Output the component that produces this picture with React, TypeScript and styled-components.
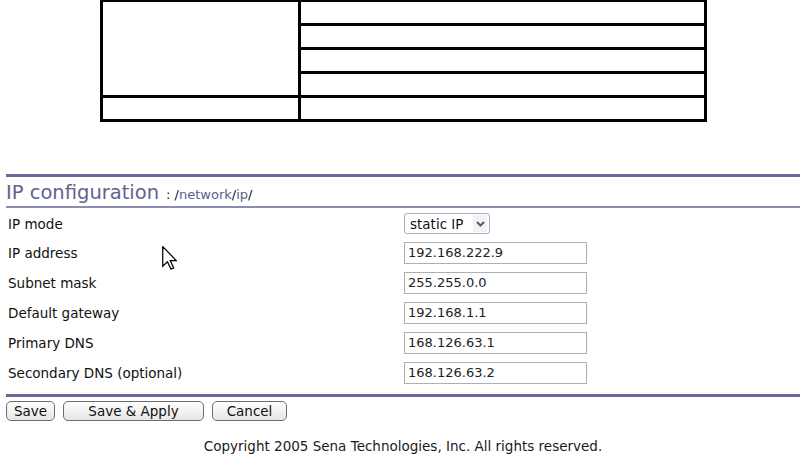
import React from "react"
import styled, { createGlobalStyle } from "styled-components"

const GlobalStyle = createGlobalStyle`
    html, body {
        margin: 0;
        padding: 0;
        background: #ffffff;
    }
    body {
        font-family: "DejaVu Sans", "Liberation Sans", sans-serif;
        color: #111111;
    }
`

const Page = styled.div`
    position: relative;
    display: flow-root;
    width: 806px;
    height: 470px;
    overflow: hidden;
`

const Frame = styled.div`
    display: grid;
    grid-template-columns: 195px 1fr;
    grid-auto-rows: 21px;
    gap: 3px;
    width: 601px;
    margin: -1px auto 0;
    border: 3px solid #000000;
    background: #000000;
`

const FrameCell = styled.div<{ span?: number }>`
    background: #ffffff;
    grid-row: ${({ span }) => (span ? `span ${span}` : "auto")};
`

const Section = styled.div`
    margin: 52px 6px 0;
`

const Heading = styled.div`
    display: flex;
    align-items: baseline;
    height: 34px;
    box-sizing: border-box;
    padding-top: 4px;
    border-top: 3px solid #6a6a98;
    border-bottom: 2px solid #8c8cb2;
`

const Title = styled.span`
    font-size: 19.5px;
    color: #62628e;
    margin-right: 7px;
`

const Crumbs = styled.span`
    font-size: 13px;
    color: #111111;
`

const Crumb = styled.span`
    color: #56628a;
`

const Rows = styled.div`
    padding-top: 1px;
`

const Row = styled.div`
    display: grid;
    grid-template-columns: 398px 1fr;
    align-items: center;
    padding: 4px 0;
`

const Label = styled.div`
    font-size: 13.5px;
    padding-left: 2px;
`

const TextBox = styled.div`
    width: 183px;
    height: 22px;
    box-sizing: border-box;
    border: 1px solid #a9b0b6;
    padding-left: 3px;
    font-size: 13px;
    line-height: 20px;
    color: #222222;
    background: #ffffff;
`

const Select = styled.div`
    display: flex;
    align-items: center;
    justify-content: space-between;
    width: 86px;
    height: 21px;
    box-sizing: border-box;
    border: 1px solid #a9b0b6;
    border-radius: 3px;
    padding: 0 2px 0 5px;
    font-size: 13.5px;
    background: #ffffff;
`

const SelectArrow = styled.span`
    display: flex;
    align-items: center;
    justify-content: center;
    width: 14px;
    height: 17px;
    background: #f1f3f7;
`

const Rule = styled.div`
    margin-top: 6px;
    border-top: 3px solid #6a6a98;
`

const Buttons = styled.div`
    display: flex;
    gap: 8px;
    margin-top: 4px;
`

const Button = styled.button<{ w: number }>`
    width: ${({ w }) => w}px;
    height: 20px;
    padding: 0;
    border: 1px solid #6d6d6d;
    border-radius: 5px;
    background: linear-gradient(#ffffff, #e6e6e6);
    font-family: "DejaVu Sans", "Liberation Sans", sans-serif;
    font-size: 13.5px;
    color: #111111;
    line-height: 18px;
`

const Footer = styled.div`
    margin-top: 17px;
    text-align: center;
    font-size: 13.5px;
    color: #1a1a1a;
`

const Cursor = styled.svg`
    position: absolute;
    left: 162px;
    top: 246px;
`

const fields = [
    { label: "IP address", value: "192.168.222.9" },
    { label: "Subnet mask", value: "255.255.0.0" },
    { label: "Default gateway", value: "192.168.1.1" },
    { label: "Primary DNS", value: "168.126.63.1" },
    { label: "Secondary DNS (optional)", value: "168.126.63.2" },
]

const App = (): JSX.Element => (
    <Page>
        <GlobalStyle />
        <Frame>
            <FrameCell span={4} />
            <FrameCell />
            <FrameCell />
            <FrameCell />
            <FrameCell />
            <FrameCell />
            <FrameCell />
        </Frame>

        <Section>
            <Heading>
                <Title>IP configuration</Title>
                <Crumbs>
                    : /<Crumb>network</Crumb>/<Crumb>ip</Crumb>/
                </Crumbs>
            </Heading>
            <Rows>
                <Row>
                    <Label>IP mode</Label>
                    <Select>
                        static IP
                        <SelectArrow>
                            <svg width="9" height="6" viewBox="0 0 9 6">
                                <polyline
                                    points="1,1 4.5,4.5 8,1"
                                    fill="none"
                                    stroke="#4a5d85"
                                    strokeWidth="2"
                                />
                            </svg>
                        </SelectArrow>
                    </Select>
                </Row>
                {fields.map((f) => (
                    <Row key={f.label}>
                        <Label>{f.label}</Label>
                        <TextBox>{f.value}</TextBox>
                    </Row>
                ))}
            </Rows>
            <Rule />
            <Buttons>
                <Button w={49}>Save</Button>
                <Button w={141}>Save &amp; Apply</Button>
                <Button w={75}>Cancel</Button>
            </Buttons>
            <Footer>Copyright 2005 Sena Technologies, Inc. All rights reserved.</Footer>
        </Section>

        <Cursor width="15" height="24" viewBox="0 0 12 19.5">
            <path
                d="M0.5 0.5 L0.5 16.5 L4.3 12.8 L7.2 18.8 L9.4 17.8 L6.6 11.8 L11.5 11.8 Z"
                fill="#ffffff"
                stroke="#000000"
                strokeWidth="1"
                strokeLinejoin="miter"
            />
        </Cursor>
    </Page>
)

export default App
